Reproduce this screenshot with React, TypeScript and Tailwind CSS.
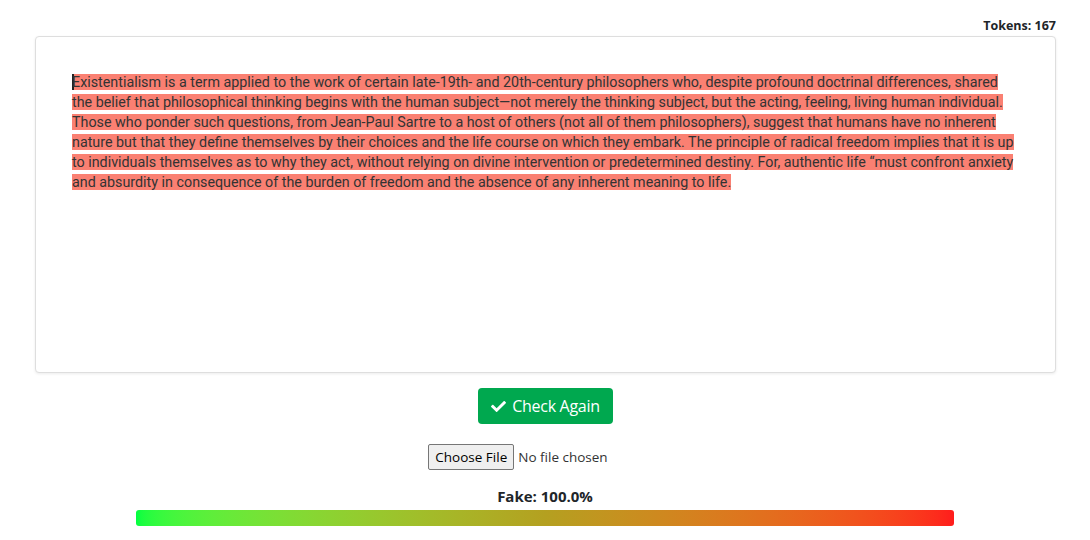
import { FaCheck } from "react-icons/fa";

const passage =
  "Existentialism is a term applied to the work of certain late-19th- and 20th-century philosophers who, despite profound doctrinal differences, shared the belief that philosophical thinking begins with the human subject\u2014not merely the thinking subject, but the acting, feeling, living human individual. Those who ponder such questions, from Jean-Paul Sartre to a host of others (not all of them philosophers), suggest that humans have no inherent nature but that they define themselves by their choices and the life course on which they embark. The principle of radical freedom implies that it is up to individuals themselves as to why they act, without relying on divine intervention or predetermined destiny. For, authentic life \u201cmust confront anxiety and absurdity in consequence of the burden of freedom and the absence of any inherent meaning to life.";

export default function App() {
  const fake = 100.0;

  return (
    <div className="min-h-[540px] w-full bg-white font-['Open_Sans',sans-serif] text-[#212529]">
      <div className="px-[34px] pt-[16px]">
        <div className="flex justify-end">
          <span className="text-[12.5px] font-bold leading-[20px]">
            Tokens: 167
          </span>
        </div>

        <div className="ml-[1px] h-[337px] rounded-[4px] border border-[#dedede] bg-white shadow-[0_1px_3px_rgba(0,0,0,0.08)] pl-[36px] pr-[34px] pt-[35px]">
          <p className="font-['Roboto',sans-serif] text-[14.3px] leading-[20px] text-[#333]">
            <span className="bg-[#fa8072] shadow-[inset_2px_0_0_#222]">{passage}</span>
          </p>
        </div>

        <div className="mt-[15px] flex justify-center">
          <button className="ml-[1px] flex h-[36px] items-center gap-[6px] rounded-[4px] bg-[#00a84f] px-[13px] text-[16px] text-white">
            <FaCheck size={15} />
            <span className="tracking-[-0.3px]">Check Again</span>
          </button>
        </div>

        <div className="mt-[20px] flex justify-center">
          <div className="ml-[-54px] flex items-center gap-[4px] text-[13.5px]">
            <span className="rounded-[2px] border border-[#767676] bg-[#efefef] px-[6px] py-[3px] leading-[18px] text-black">
              Choose File
            </span>
            <span className="text-[#333]">No file chosen</span>
          </div>
        </div>

        <div className="mt-[16px] flex justify-center">
          <span className="text-[15px] font-bold leading-[20px]">
            Fake: {fake.toFixed(1)}%
          </span>
        </div>
      </div>

      <div className="mt-[4px] flex justify-center">
        <div className="h-[16px] w-3/4 rounded-[3px] bg-gradient-to-r from-[#00ff40] via-[#b4a020] to-[#ff1c1c]"></div>
      </div>
    </div>
  );
}
